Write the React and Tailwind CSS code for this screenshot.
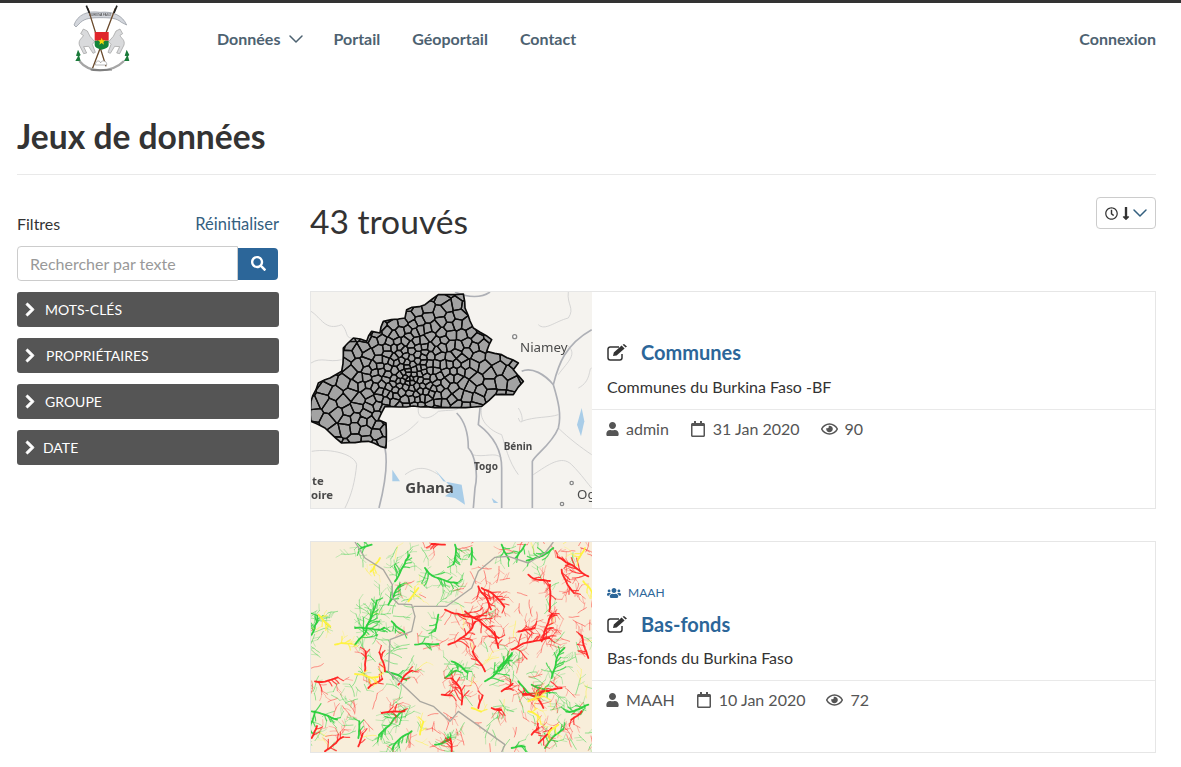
import React from "react";
import {
  FaUser,
  FaRegCalendar,
  FaRegEye,
  FaUsers,
  FaChevronRight,
  FaSearch,
  FaRegClock,
  FaLongArrowAltDown,
} from "react-icons/fa";
import { ChevronDown } from "lucide-react";

const rng = (seed) => () => {
  seed = (seed * 16807) % 2147483647;
  return (seed - 1) / 2147483646;
};

const HORSE = "M92 92 L100 78 L112 84 L120 100 L134 116 L127 124 L136 148 L129 151 L116 130 L101 131 L110 150 L101 152 L88 126 C84 110 97 106 100 97 Z";

function Logo() {
  return (
    <svg viewBox="0 0 300 225" className="h-[75px] w-[100px] shrink-0 blur-[0.4px]">
      <path d="M72 66 C82 36 112 22 150 28 C190 24 218 38 230 66 L214 58 C200 45 180 44 150 44 C125 44 105 46 92 58 L78 72 Z" fill="#d3d6dc" stroke="#8a8f99" strokeWidth="2" />
      <text x="150" y="39" textAnchor="middle" fontSize="9" fill="#333" fontFamily="Liberation Sans, sans-serif">BURKINA FASO</text>
      <path d="M114 16 L168 190 M196 16 L126 200" stroke="#6a4a2c" strokeWidth="4" />
      <path d="M109 8 L118 30 M201 8 L192 30" stroke="#222" strokeWidth="5" />
      <path d={HORSE} fill="#d9dadc" stroke="#9a9a9a" strokeWidth="2" />
      <g transform="translate(310,0) scale(-1,1)">
        <path d={HORSE} fill="#d9dadc" stroke="#9a9a9a" strokeWidth="2" />
      </g>
      <rect x="134" y="87" width="42" height="26" fill="#e0252b" />
      <path d="M134 113 H176 V126 Q176 136 155 140 Q134 136 134 126 Z" fill="#13843a" />
      <path d="M155 104 L158 112 L166 112 L160 117 L162 125 L155 120 L148 125 L150 117 L144 112 L152 112 Z" fill="#f5d90a" />
      <path d="M84 140 L78 158 L84 160 L76 174 L92 174 L88 160 L92 156 Z M230 140 L224 158 L230 160 L222 174 L238 174 L234 160 L238 156 Z" fill="#1a7a3a" />
      <path d="M88 174 C104 194 125 202 150 202 C180 202 204 192 222 174" fill="none" stroke="#a5a5a5" strokeWidth="7" />
      <path d="M136 186 C136 172 150 170 152 180 C154 170 172 172 170 186 Z" fill="#fff" stroke="#999" strokeWidth="2" />
      <path d="M122 201 H186" stroke="#333" strokeWidth="2" />
    </svg>
  );
}

function Header() {
  return (
    <header className="flex h-[72px] items-start border-t-[3px] border-[#333] pl-[50px] pr-[25px]">
      <Logo />
      <nav className="ml-[67px] flex h-full items-center gap-[32px] pt-[3px] text-[16px] font-bold text-[#4d6271]">
        <a className="-mr-[7px] flex items-center gap-[4px]">
          Données <ChevronDown className="h-[24px] w-[24px]" strokeWidth={1.5} />
        </a>
        <a>Portail</a>
        <a>Géoportail</a>
        <a>Contact</a>
      </nav>
      <a className="ml-auto flex h-full items-center pt-[3px] text-[16px] font-bold text-[#4d6271]">
        Connexion
      </a>
    </header>
  );
}

const FILTERS = [
  { label: "Mots-clés", pad: "ml-[9px]" },
  { label: "Propriétaires", pad: "ml-[10px]" },
  { label: "Groupe", pad: "ml-[9px]" },
  { label: "Date", pad: "ml-[7px]" },
];

function Sidebar() {
  return (
    <aside className="w-[262px] shrink-0 pt-[17px]">
      <div className="flex items-center justify-between text-[16px] leading-[20px]">
        <span className="text-[#333]">Filtres</span>
        <a className="text-[16.5px] text-[#34607f]">Réinitialiser</a>
      </div>
      <div className="mt-[12px] flex w-[261px] items-center">
        <input
          placeholder="Rechercher par texte"
          className="h-[35px] w-[221px] rounded-l-[4px] border border-[#ccc] px-[12px] text-[16px] text-[#333] outline-none placeholder:text-[#999]"
        />
        <button className="flex h-[32px] w-[40px] items-center justify-center rounded-r-[4px] bg-[#2c6699] text-white">
          <FaSearch className="h-[15px] w-[15px]" />
        </button>
      </div>
      <div className="mt-[11px] flex flex-col gap-[11px]">
        {FILTERS.map((f) => (
          <div
            key={f.label}
            className="flex h-[35px] items-center rounded-[3px] bg-[#555] pl-[7px] text-[14px] uppercase text-white"
          >
            <FaChevronRight className="h-[15px] w-[12px]" stroke="currentColor" strokeWidth={30} />
            <span className={f.pad}>{f.label}</span>
          </div>
        ))}
      </div>
    </aside>
  );
}

const BF_CORNERS = [
  [400, 20], [475, 18], [480, 60], [505, 120], [560, 155], [545, 190], [590, 200], [640, 225], [625, 245], [655, 280], [625, 320], [570, 320],
  [530, 355], [410, 358], [240, 355], [220, 395], [243, 405], [243, 480], [190, 460], [110, 465], [60, 420], [18, 400], [18, 340], [40, 285],
  [110, 250], [115, 180], [145, 150], [185, 160], [200, 130], [225, 135], [235, 100], [300, 90], [305, 65], [360, 50],
];

// break each edge of the country into short jagged pieces
function bfOutline() {
  const r = rng(771);
  const pts = [];
  BF_CORNERS.forEach(([x, y], i) => {
    const [nx, ny] = BF_CORNERS[(i + 1) % BF_CORNERS.length];
    const n = Math.max(1, Math.round(Math.hypot(nx - x, ny - y) / 22));
    for (let k = 0; k < n; k++) {
      const t = k / n;
      const j = k === 0 ? 0 : 5;
      pts.push(`${(x + (nx - x) * t + (r() - 0.5) * j).toFixed(0)},${(y + (ny - y) * t + (r() - 0.5) * j).toFixed(0)}`);
    }
  });
  return pts.join(" ");
}

// communes: voronoi cells whose sites crowd toward the centre of the country
function communeCells() {
  const r = rng(4217);
  const sites = [];
  for (let n = 0; n < 9000; n++) {
    const x = r() * 680;
    const y = r() * 500;
    const dist = Math.hypot(x - 320, y - 265);
    const min = Math.min(30, 9 + dist * 0.075);
    if (sites.every(([sx, sy]) => Math.hypot(sx - x, sy - y) > min)) sites.push([x, y]);
  }
  const box = [[-20, -20], [700, -20], [700, 520], [-20, 520]];
  return sites.map((s) => {
    let poly = box;
    sites.forEach((t) => {
      if (t === s || Math.hypot(t[0] - s[0], t[1] - s[1]) > 120) return;
      const mx = (s[0] + t[0]) / 2;
      const my = (s[1] + t[1]) / 2;
      const nx = t[0] - s[0];
      const ny = t[1] - s[1];
      const side = (p) => (p[0] - mx) * nx + (p[1] - my) * ny;
      const next = [];
      poly.forEach((p, i) => {
        const q = poly[(i + 1) % poly.length];
        const a = side(p);
        const b = side(q);
        if (a <= 0) next.push(p);
        if (a < 0 !== b < 0) {
          const u = a / (a - b);
          next.push([p[0] + (q[0] - p[0]) * u, p[1] + (q[1] - p[1]) * u]);
        }
      });
      poly = next;
    });
    return poly.map((p) => `${p[0].toFixed(1)},${p[1].toFixed(1)}`).join(" ");
  });
}

function CommunesMap() {
  const outline = bfOutline();
  return (
    <svg viewBox="18 12 843 648" className="h-full w-full blur-[0.4px]">
      <defs>
        <clipPath id="bf-clip">
          <polygon points={outline} />
        </clipPath>
      </defs>
      <rect x="18" y="12" width="843" height="648" fill="#f5f3ef" />
      <g fill="none" stroke="#cfcfcf" strokeWidth="2.5">
        <path d="M18 70 C50 90 60 130 110 110 C130 130 120 150 140 150" />
        <path d="M18 225 C50 205 70 225 110 215" />
        <path d="M790 12 C785 50 810 60 790 90 C750 100 720 130 700 110" />
        <path d="M640 360 C660 390 650 420 640 390 M650 400 C690 385 730 390 760 380" />
        <path d="M340 360 C335 395 370 400 400 370 C430 365 450 370 460 360" />
        <path d="M250 460 C300 440 320 420 340 400" />
        <path d="M530 360 C520 400 560 430 590 440 C600 470 610 520 640 560" />
        <path d="M760 420 C790 450 830 480 860 500" />
        <path d="M20 490 C80 480 150 500 155 530 C150 580 140 620 120 660" />
        <path d="M300 560 C340 530 370 540 400 560 M500 500 C540 510 570 490 590 510" />
        <path d="M685 560 C730 530 770 500 800 530 C830 560 850 590 860 600" />
        <path d="M760 260 C780 230 820 200 790 175 M820 300 C860 280 850 240 860 240" />
      </g>
      <g fill="none" stroke="#aeb0b6" strokeWidth="5">
        <path d="M450 12 C490 30 530 30 555 12" />
        <path d="M650 250 C680 235 720 260 745 290 C760 340 770 380 760 420 C740 470 690 500 682 520 L682 660" />
        <path d="M745 290 C760 230 780 170 860 125" />
        <path d="M455 375 C480 400 490 440 490 480 C510 500 520 560 510 600 L505 660" />
        <path d="M525 360 L520 410 C560 440 590 480 590 540 L590 660" />
        <path d="M240 480 C250 530 240 590 222 660" />
      </g>
      <g fill="#a9cde8">
        <path d="M830 360 L838 400 L828 445 L816 410 Z" />
        <path d="M262 545 L285 580 L262 580 Z" />
        <path d="M390 545 L415 580 L470 590 L480 650 L450 630 L420 625 L445 605 Z" />
        <path d="M560 630 L580 645 L566 645 Z" />
      </g>
      <g fill="#fff" stroke="#888" strokeWidth="4">
        <circle cx="629" cy="146" r="6" />
        <circle cx="800" cy="585" r="5" />
        <circle cx="771" cy="648" r="5" />
      </g>
      <g fontFamily="Noto Sans, sans-serif" fill="#4a4a4a">
        <text x="645" y="193" fontSize="40">Niamey</text>
        <text x="596" y="486" fontSize="30" fontWeight="700">Bénin</text>
        <text x="507" y="547" fontSize="30" fontWeight="700">Togo</text>
        <text x="301" y="614" fontSize="45" fontWeight="700" fill="#444">Ghana</text>
        <text x="21" y="592" fontSize="34" fontWeight="700">te</text>
        <text x="18" y="634" fontSize="34" fontWeight="700">oire</text>
        <text x="816" y="634" fontSize="40">Og</text>
      </g>
      <polygon points={outline} fill="#a3a3a3" />
      <g clipPath="url(#bf-clip)" fill="none" stroke="#0c0c0c" strokeWidth="4" strokeLinejoin="round">
        {communeCells().map((points, i) => (
          <polygon key={i} points={points} />
        ))}
      </g>
      <polygon points={outline} fill="none" stroke="#0c0c0c" strokeWidth="5" strokeLinejoin="round" />
    </svg>
  );
}

const RED = "#ff1f1f";
const GREEN = "#28cf3c";
const YELLOW = "#fff23a";

// outlet of each river network: x, y, direction, length, colour
const TRUNKS = [
  [150, 320, -0.8, 150, GREEN], [250, 200, -0.9, 70, GREEN], [270, 130, -0.9, 90, GREEN], [150, 270, -0.2, 90, GREEN],
  [360, 90, 1.2, 110, GREEN], [450, 20, 1.1, 60, GREEN], [660, 20, 1.8, 50, GREEN], [200, 20, 2.7, 40, GREEN],
  [745, 30, 2.6, 90, GREEN], [590, 20, 1.4, 45, GREEN], [400, 230, 1.9, 50, GREEN], [500, 30, 1.6, 50, GREEN],
  [330, 320, 0.1, 70, GREEN], [20, 290, -0.9, 60, GREEN], [440, 370, 0.1, 60, GREEN], [20, 520, 0.4, 80, GREEN],
  [540, 430, -0.8, 120, GREEN], [620, 350, 2.3, 60, GREEN], [240, 400, 0, 70, GREEN], [420, 420, -0.6, 40, GREEN],
  [300, 515, 2.6, 110, GREEN], [320, 580, 2.5, 80, GREEN], [160, 600, -1.5, 50, GREEN], [390, 620, -0.1, 50, GREEN],
  [30, 520, 1.6, 60, GREEN], [720, 630, -1, 80, GREEN], [850, 500, 2.8, 70, GREEN], [620, 630, 0, 40, GREEN],
  [680, 440, 0.8, 60, GREEN], [740, 420, -1.4, 100, GREEN], [640, 430, 1, 60, GREEN], [260, 250, 0.7, 50, GREEN],
  [520, 145, 1.2, 80, RED], [530, 150, 0.4, 90, RED], [420, 215, 0.7, 100, RED], [480, 220, 0.7, 130, RED],
  [430, 320, -0.4, 110, RED], [620, 335, -0.2, 120, RED], [710, 310, -1.3, 90, RED], [640, 280, -0.3, 50, RED],
  [850, 115, 3.3, 110, RED], [770, 95, 1.3, 80, RED], [670, 110, 0.8, 70, RED], [735, 140, 1.7, 80, RED],
  [540, 400, -2, 70, RED], [180, 400, -1.5, 60, RED], [240, 400, -1.6, 60, RED], [280, 440, -0.8, 60, RED],
  [190, 450, -0.6, 50, RED], [470, 500, -1.4, 90, RED], [715, 510, -1.9, 80, RED], [770, 450, -3, 80, RED],
  [850, 360, -1.7, 70, RED], [30, 430, 0.4, 70, RED], [230, 525, -0.3, 70, RED], [520, 510, -1.5, 35, RED],
  [740, 570, 2.2, 60, RED], [160, 625, -1.4, 35, RED], [60, 640, -0.7, 70, RED], [440, 640, -1.5, 40, RED],
  [20, 600, -1.2, 40, RED], [580, 330, -2, 50, RED], [420, 20, 3, 35, RED], [590, 460, -0.6, 40, RED],
  [830, 520, 2, 40, RED], [560, 510, 0.4, 30, RED], [410, 470, 0.2, 30, RED], [680, 590, -1, 30, RED],
  [310, 190, -1, 50, YELLOW], [40, 230, 0.8, 50, YELLOW], [90, 320, -0.4, 50, YELLOW], [150, 408, 0, 70, YELLOW],
  [670, 490, -0.7, 45, YELLOW], [670, 520, 0.2, 40, YELLOW], [225, 60, 2.2, 45, YELLOW], [835, 130, 1, 40, YELLOW],
  [500, 510, 0.3, 30, YELLOW], [345, 590, -1.5, 35, YELLOW], [760, 560, 2.4, 35, YELLOW], [840, 30, 2, 35, YELLOW],
];

function riverPaths() {
  const r = rng(90331);
  const out = [];
  const grow = (sx, sy, sa, len, width, color, depth) => {
    let x = sx;
    let y = sy;
    let a = sa;
    const steps = Math.max(2, Math.round(len / 10));
    let d = `M${x.toFixed(0)} ${y.toFixed(0)}`;
    for (let i = 0; i < steps; i++) {
      a += (r() - 0.5) * 0.55;
      x += Math.cos(a) * 10;
      y += Math.sin(a) * 10;
      d += `L${x.toFixed(0)} ${y.toFixed(0)}`;
      if (depth < 3 && r() < (depth === 0 ? 0.7 : 0.45)) {
        const side = r() < 0.5 ? -1 : 1;
        const rest = len * (1 - i / steps);
        grow(x, y, a + side * (0.6 + r() * 0.4), Math.max(12, rest * 0.4), Math.max(2, width * 0.65), color, depth + 1);
      }
    }
    out.push({ d, width, color, opacity: [0.95, 0.78, 0.55, 0.4][depth] });
  };
  // faint headwaters scattered over the sheet, red in the east, green in the west
  for (let n = 0; n < 320; n++) {
    const x = 18 + r() * 843;
    const y = 12 + r() * 630;
    if ((x < 150 && y < 200) || (x > 340 && x < 430 && y > 340 && y < 500)) continue;
    const redSide = x > 420 && y < 340 ? 0.8 : y > 400 ? 0.45 : 0.2;
    const pick = r();
    const color = pick < 0.1 ? YELLOW : pick < 0.1 + redSide * 0.9 ? RED : GREEN;
    grow(x, y, r() * 6.28, 22 + r() * 26, 2.6, color, 2);
  }
  TRUNKS.forEach(([x, y, a, len, color]) => grow(x, y, a, len, 5.5, color, 0));
  return out;
}

function BasFondsMap() {
  return (
    <svg viewBox="18 12 843 630" className="h-full w-full blur-[0.5px]">
      <rect x="18" y="12" width="843" height="630" fill="#f8eeda" />
      <g fill="none" strokeLinecap="round" strokeLinejoin="round">
        {riverPaths().map((p, i) => (
          <path key={i} d={p.d} stroke={p.color} strokeWidth={p.width} strokeOpacity={p.opacity} />
        ))}
      </g>
      <path
        d="M150 12 L180 60 L235 95 L262 140 L262 180 L280 198 L320 200 L330 235 L320 280 L255 305 L250 400 L345 490 L385 505 L435 550 L460 520 L600 620 L590 642 M325 205 L425 205 L500 150 L520 100 L570 58 L610 55 L670 75 L720 45 L745 12"
        fill="none"
        stroke="#a9a7a0"
        strokeWidth="4"
        strokeLinejoin="round"
      />
    </svg>
  );
}

function EditIcon() {
  return (
    <svg viewBox="0 0 20 17" className="h-[17px] w-[20px] shrink-0 text-[#333]">
      <path d="M12 3 H3.2 a2.2 2.2 0 0 0 -2.2 2.2 v8.6 a2.2 2.2 0 0 0 2.2 2.2 h9.6 a2.2 2.2 0 0 0 2.2 -2.2 V10" fill="none" stroke="currentColor" strokeWidth="1.5" />
      <path d="M6 12 L6.8 8.6 L14.6 1.6 L17.6 4.4 L9.6 11.4 Z M15.6 0.8 L17 0 L20 2.6 L18.6 3.6 Z" fill="currentColor" />
    </svg>
  );
}

function Meta({ icon, text }) {
  return (
    <span className="flex items-center gap-[7px]">
      {icon}
      <span>{text}</span>
    </span>
  );
}

function DatasetCard({ map, height, bodyPad, group, title, description, owner, date, views }) {
  return (
    <article className={`flex border border-[#e6e6e6] ${height}`}>
      <div className="h-full w-[281px] shrink-0 overflow-hidden">{map}</div>
      <div className={`flex-1 ${bodyPad}`}>
        {group && (
          <div className="mb-[9px] flex h-[16px] items-center gap-[7px] pl-[15px] text-[12px] uppercase text-[#2c6699]">
            <FaUsers className="h-[14px] w-[14px]" />
            <span>{group}</span>
          </div>
        )}
        <h3 className="flex h-[28px] items-center pl-[15px] text-[20px] font-bold text-[#2c6699]">
          <EditIcon />
          <span className="ml-[14px]">{title}</span>
        </h3>
        <p className={`h-[22px] pl-[15px] text-[16px] leading-[22px] text-[#333] ${group ? "mt-[9px]" : "mt-[10px]"}`}>{description}</p>
        <div className="mt-[11px] flex items-center gap-[21px] border-t border-[#e9e9e9] pl-[14px] pt-[9px] text-[16px] leading-[20px] text-[#555]">
          <Meta icon={<FaUser className="h-[14px] w-[13px]" />} text={owner} />
          <Meta icon={<FaRegCalendar className="h-[16px] w-[16px]" />} text={date} />
          <Meta icon={<FaRegEye className="h-[16px] w-[17px]" />} text={views} />
        </div>
      </div>
    </article>
  );
}

export default function App() {
  return (
    <div className="h-[767px] overflow-hidden bg-white font-['Lato',sans-serif] text-[#333]">
      <Header />
      <main className="pl-[17px] pr-[25px]">
        <h1 className="mt-[44px] text-[33.6px] font-bold leading-[40px] text-[#333]">Jeux de données</h1>
        <div className="mt-[18px] border-t border-[#e9e9e9]" />
        <div className="mt-[22px] flex gap-[31px]">
          <Sidebar />
          <section className="min-w-0 flex-1">
            <div className="flex h-[52px] items-start justify-between">
              <h2 className="text-[33.6px] font-normal leading-[48px] text-[#333]">43 trouvés</h2>
              <button className="flex h-[32px] w-[60px] items-center rounded-[4px] border border-[#ccc] pl-[8px] text-[#333]">
                <FaRegClock className="h-[13px] w-[13px] shrink-0" />
                <FaLongArrowAltDown className="ml-[3px] h-[15px] w-[10px] shrink-0" />
                <ChevronDown className="-ml-[3px] h-[24px] w-[24px] shrink-0 text-[#34607f]" strokeWidth={1.5} />
              </button>
            </div>
            <div className="mt-[42px] flex flex-col gap-[32px]">
              <DatasetCard
                map={<CommunesMap />}
                height="h-[218px]"
                bodyPad="pt-[46px]"
                title="Communes"
                description="Communes du Burkina Faso -BF"
                owner="admin"
                date="31 Jan 2020"
                views="90"
              />
              <DatasetCard
                map={<BasFondsMap />}
                height="h-[212px]"
                bodyPad="pt-[43px]"
                group="MAAH"
                title="Bas-fonds"
                description="Bas-fonds du Burkina Faso"
                owner="MAAH"
                date="10 Jan 2020"
                views="72"
              />
            </div>
          </section>
        </div>
      </main>
    </div>
  );
}
